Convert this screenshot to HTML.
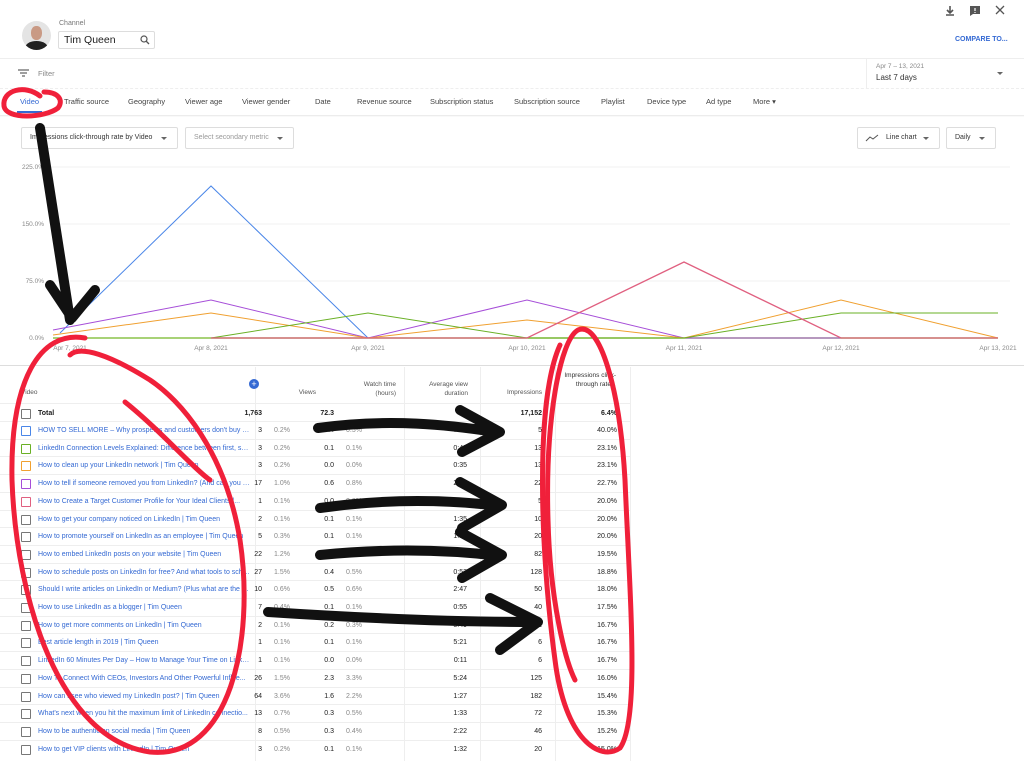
<!DOCTYPE html>
<html><head><meta charset="utf-8"><style>
*{margin:0;padding:0;box-sizing:border-box}
body{width:1024px;height:761px;overflow:hidden;background:#fff;font-family:"Liberation Sans",sans-serif;color:#202020;position:relative}
.a{position:absolute;white-space:nowrap}
.tab{position:absolute;top:97px;font-size:7.5px;color:#444}
.dd{position:absolute;border:1px solid #ddd;border-radius:2px;font-size:7px;color:#333;height:22px;line-height:20px;padding-left:8px}
.dd:after{content:"";position:absolute;right:10px;top:9px;border-left:3px solid transparent;border-right:3px solid transparent;border-top:3px solid #666}
.row{position:absolute;left:0;width:630px;height:17.7px;border-top:1px solid #eee;font-size:7px;line-height:17px;white-space:nowrap}
.row span{position:absolute;white-space:nowrap}
.cb{left:21px;top:4px;width:10px;height:10px;border:1.4px solid #777;border-radius:1px}
.t{left:38px;color:#3469d3;width:212px;overflow:hidden;text-overflow:ellipsis}
.r{text-align:right}
.g{color:#888}
.vl{position:absolute;top:367px;height:394px;border-left:1px solid #eee}
</style></head><body>
<div class="a" style="left:22px;top:21px;width:29px;height:29px;border-radius:50%;background:#e4e4e4;overflow:hidden">
<div style="position:absolute;left:9px;top:5px;width:11px;height:14px;border-radius:45%;background:#c99a85"></div>
<div style="position:absolute;left:3px;top:20px;width:23px;height:14px;border-radius:50%;background:#222"></div></div>
<div class="a" style="left:59px;top:20px;font-size:7px;color:#777">Channel</div>
<div class="a" style="left:58px;top:31px;width:97px;height:18px;border:1px solid #ddd;border-radius:2px;font-size:10.5px;line-height:16px;padding-left:5px">Tim Queen</div>
<svg class="a" style="left:140px;top:35px" width="10" height="10"><circle cx="4" cy="4" r="3" fill="none" stroke="#555" stroke-width="1.2"/><path d="M6 6l3 3" stroke="#555" stroke-width="1.3"/></svg>
<svg class="a" style="left:944px;top:5px" width="12" height="12"><path d="M6 1v6M3 5l3 3 3-3M2 10h8" stroke="#555" stroke-width="1.6" fill="none"/></svg>
<svg class="a" style="left:969px;top:5px" width="12" height="12"><path d="M1 1h10v8H4l-3 2z" fill="#555"/><path d="M6 3v3M6 7v1" stroke="#fff" stroke-width="1.2"/></svg>
<svg class="a" style="left:995px;top:5px" width="10" height="10"><path d="M1 1l8 8M9 1l-8 8" stroke="#555" stroke-width="1.3"/></svg>
<div class="a" style="left:955px;top:36px;font-size:7px;font-weight:bold;color:#3469d3">COMPARE TO...</div>
<div class="a" style="left:0;top:58px;width:1024px;border-top:1px solid #eee"></div>
<svg class="a" style="left:18px;top:69px" width="12" height="9"><path d="M0 1h11M2 4h7M4 7h3" stroke="#666" stroke-width="1.2"/></svg>
<div class="a" style="left:38px;top:69px;font-size:7.5px;color:#888">Filter</div>
<div class="a" style="left:866px;top:59px;height:29px;border-left:1px solid #eee"></div>
<div class="a" style="left:876px;top:63px;font-size:6.5px;color:#888">Apr 7 – 13, 2021</div>
<div class="a" style="left:876px;top:73px;font-size:8px;color:#333">Last 7 days</div>
<div class="a" style="left:997px;top:72px;border-left:3px solid transparent;border-right:3px solid transparent;border-top:3px solid #666"></div>
<div class="a" style="left:0;top:88px;width:1024px;border-top:1px dashed #eee"></div>
<div class="tab" style="left:20px;color:#3469d3">Video</div>
<div class="tab" style="left:64px">Traffic source</div>
<div class="tab" style="left:128px">Geography</div>
<div class="tab" style="left:185px">Viewer age</div>
<div class="tab" style="left:242px">Viewer gender</div>
<div class="tab" style="left:315px">Date</div>
<div class="tab" style="left:357px">Revenue source</div>
<div class="tab" style="left:430px">Subscription status</div>
<div class="tab" style="left:514px">Subscription source</div>
<div class="tab" style="left:601px">Playlist</div>
<div class="tab" style="left:647px">Device type</div>
<div class="tab" style="left:706px">Ad type</div>
<div class="tab" style="left:753px">More ▾</div>
<div class="a" style="left:17px;top:111px;width:25px;height:2px;background:#3469d3"></div>
<div class="a" style="left:0;top:115px;width:1024px;height:2px;background:linear-gradient(#e6e6e6,#fff)"></div>
<div class="dd" style="left:21px;top:127px;width:157px">Impressions click-through rate by Video</div>
<div class="dd" style="left:185px;top:127px;width:109px;color:#999">Select secondary metric</div>
<div class="dd" style="left:857px;top:127px;width:83px;padding-left:28px">Line chart</div>
<svg class="a" style="left:865px;top:134px" width="14" height="8"><path d="M1 7l4-4 3 2 5-4" stroke="#555" stroke-width="1" fill="none"/></svg>
<div class="dd" style="left:946px;top:127px;width:50px">Daily</div>
<svg class="a" style="left:0;top:155px" width="1024" height="200" font-family="Liberation Sans" font-size="6.5" fill="#888">
<g stroke="#f0f0f0"><path d="M50 12H1010M50 69H1010M50 126H1010"/></g>
<g text-anchor="end"><text x="44" y="14">225.0%</text><text x="44" y="71">150.0%</text><text x="44" y="128">75.0%</text><text x="44" y="185">0.0%</text></g>
<g text-anchor="middle"><text x="70" y="195">Apr 7, 2021</text><text x="211" y="195">Apr 8, 2021</text><text x="368" y="195">Apr 9, 2021</text><text x="527" y="195">Apr 10, 2021</text><text x="684" y="195">Apr 11, 2021</text><text x="841" y="195">Apr 12, 2021</text><text x="998" y="195">Apr 13, 2021</text></g>
<g fill="none" stroke-width="1">
<path d="M53 183H998" stroke="#8bc34a" stroke-width="1.5"/>
<path d="M60 178L211 31L368 183L998 183" stroke="#4a86e8"/>
<path d="M53 175L211 145L368 183L527 145L684 183L998 183" stroke="#a64ed8"/>
<path d="M53 180L211 158L368 183L527 165L684 183L841 145L998 183" stroke="#f0a030"/>
<path d="M211 183L368 158L527 183L684 183L841 158L998 158" stroke="#6ab025"/>
<path d="M211 183L527 183L684 107L841 183L998 183" stroke="#e06080" stroke-width="1.3"/>
</g></svg>
<div class="a" style="left:0;top:365px;width:1024px;border-top:1px solid #ddd"></div>
<div class="vl" style="left:255px"></div><div class="vl" style="left:404px"></div><div class="vl" style="left:480px"></div><div class="vl" style="left:555px"></div><div class="vl" style="left:630px"></div>
<div class="a" style="left:21px;top:389px;font-size:6.5px;color:#555">Video</div>
<div class="a" style="left:249px;top:379px;width:10px;height:10px;border-radius:50%;background:#3469d3;color:#fff;font-size:9px;line-height:10px;text-align:center">+</div>
<div class="a" style="left:270px;top:389px;width:46px;font-size:6.5px;color:#555;text-align:right">Views</div>
<div class="a" style="left:350px;top:380px;width:46px;font-size:6.5px;color:#555;line-height:9px;white-space:normal;text-align:right">Watch time (hours)</div>
<div class="a" style="left:418px;top:380px;width:50px;font-size:6.5px;color:#555;line-height:9px;white-space:normal;text-align:right">Average view duration</div>
<div class="a" style="left:490px;top:389px;width:52px;font-size:6.5px;color:#555;text-align:right">Impressions</div>
<div class="a" style="left:562px;top:371px;width:54px;font-size:6.5px;color:#333;line-height:9px;white-space:normal;text-align:right">Impressions click-through rate ↓</div>
<div id="rows"></div>
<script>
var d=[["Total","1,763","","72.3","","","17,152","6.4%",""],
["HOW TO SELL MORE – Why prospects and customers don't buy fro...","3","0.2%","0.4","0.5%","7:10","5","40.0%","#4a86e8"],
["LinkedIn Connection Levels Explained: Difference between first, sec...","3","0.2%","0.1","0.1%","0:42","13","23.1%","#6ab025"],
["How to clean up your LinkedIn network | Tim Queen","3","0.2%","0.0","0.0%","0:35","13","23.1%","#f0a030"],
["How to tell if someone removed you from LinkedIn? (And can you d...","17","1.0%","0.6","0.8%","2:10","22","22.7%","#a64ed8"],
["How to Create a Target Customer Profile for Your Ideal Clients |...","1","0.1%","0.0","0.0%","0:40","5","20.0%","#e06080"],
["How to get your company noticed on LinkedIn | Tim Queen","2","0.1%","0.1","0.1%","1:35","10","20.0%",""],
["How to promote yourself on LinkedIn as an employee | Tim Queen","5","0.3%","0.1","0.1%","1:03","20","20.0%",""],
["How to embed LinkedIn posts on your website | Tim Queen","22","1.2%","0.3","0.4%","0:50","82","19.5%",""],
["How to schedule posts on LinkedIn for free? And what tools to sche...","27","1.5%","0.4","0.5%","0:53","128","18.8%",""],
["Should I write articles on LinkedIn or Medium? (Plus what are the b...","10","0.6%","0.5","0.6%","2:47","50","18.0%",""],
["How to use LinkedIn as a blogger | Tim Queen","7","0.4%","0.1","0.1%","0:55","40","17.5%",""],
["How to get more comments on LinkedIn | Tim Queen","2","0.1%","0.2","0.3%","5:49","12","16.7%",""],
["Best article length in 2019 | Tim Queen","1","0.1%","0.1","0.1%","5:21","6","16.7%",""],
["LinkedIn 60 Minutes Per Day – How to Manage Your Time on Linke...","1","0.1%","0.0","0.0%","0:11","6","16.7%",""],
["How To Connect With CEOs, Investors And Other Powerful Influe...","26","1.5%","2.3","3.3%","5:24","125","16.0%",""],
["How can I see who viewed my LinkedIn post? | Tim Queen","64","3.6%","1.6","2.2%","1:27","182","15.4%",""],
["What's next when you hit the maximum limit of LinkedIn connectio...","13","0.7%","0.3","0.5%","1:33","72","15.3%",""],
["How to be authentic on social media | Tim Queen","8","0.5%","0.3","0.4%","2:22","46","15.2%",""],
["How to get VIP clients with LinkedIn | Tim Queen","3","0.2%","0.1","0.1%","1:32","20","15.0%",""]];
var h="";d.forEach(function(r,i){var y=i==0?403:421+(i-1)*17.7;var tot=i==0;var b=tot?"font-weight:bold;":"";
h+='<div class="row" style="top:'+y+'px;'+(tot?'height:19px;line-height:19px;':'')+'">'+
'<span class="cb" style="'+(r[8]?'border-color:'+r[8]+';':'')+(tot?'top:5px':'')+'"></span>'+
'<span class="t" style="'+(tot?'color:#202020;':'')+b+'">'+r[0]+'</span>'+
'<span class="r" style="left:230px;width:32px;'+b+'">'+r[1]+'</span>'+
'<span class="r g" style="left:270px;width:20px">'+r[2]+'</span>'+
'<span class="r" style="left:300px;width:34px;'+b+'">'+r[3]+'</span>'+
'<span class="r g" style="left:340px;width:22px">'+r[4]+'</span>'+
'<span class="r" style="left:420px;width:47px">'+r[5]+'</span>'+
'<span class="r" style="left:490px;width:52px;'+b+'">'+r[6]+'</span>'+
'<span class="r" style="left:565px;width:52px;'+b+'">'+r[7]+'</span></div>';});
document.getElementById("rows").innerHTML=h;
</script>
<svg class="a" style="left:0;top:0" width="1024" height="761" fill="none" stroke-linecap="round" stroke-linejoin="round">
<g stroke="#f0203a" stroke-width="5">
<path d="M40 96C25 84 2 90 4 106C6 120 45 118 58 108C64 100 58 92 44 92"/>
<path d="M85 338C40 330 10 380 12 480C16 600 60 740 150 752C230 760 255 640 240 540C225 450 180 400 150 380C110 355 80 345 70 355"/>
<path d="M125 402C160 430 195 470 210 480"/>
<path d="M560 345C535 400 540 550 555 660C565 740 600 762 620 748C640 720 630 600 625 480C620 390 600 320 578 330C560 340 545 420 548 520C550 600 565 660 575 680"/>
</g>
<g stroke="#111" stroke-width="10">
<path d="M40 128L70 320M50 285L72 318L95 290"/>
<path d="M318 428C390 418 450 425 495 432M460 410L500 432L462 452"/>
<path d="M320 508C390 498 450 500 500 506M460 482L502 505L462 528"/>
<path d="M320 555C390 548 450 550 500 556M460 532L502 555L462 578"/>
<path d="M268 612C360 618 460 622 535 622M490 598L538 622L500 650"/>
</g></svg>
</body></html>
